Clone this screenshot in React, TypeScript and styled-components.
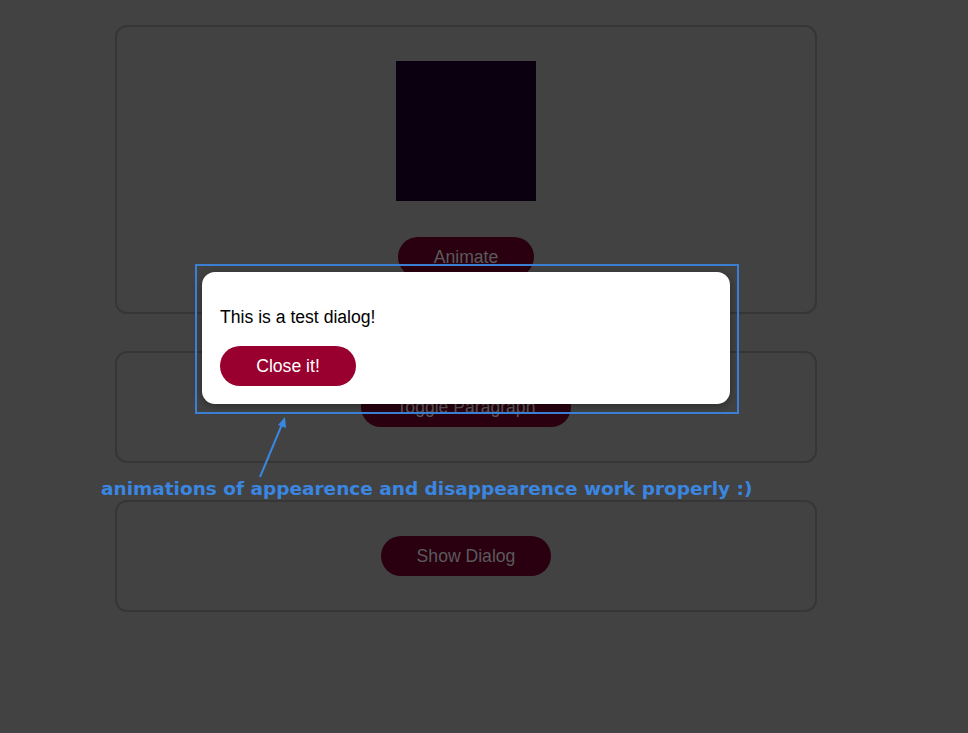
import React from "react";
import styled, { createGlobalStyle } from "styled-components";

const Global = createGlobalStyle`
  html, body { margin: 0; padding: 0; background: #424242; }
  body { font-family: "Liberation Sans", Arial, sans-serif; }
  * { box-sizing: border-box; }
`;

const Page = styled.div`
  position: relative;
  width: 968px;
  height: 733px;
  overflow: hidden;
  padding: 25px 0 0 115px;
`;

const Stack = styled.div`
  width: 702px;
  display: flex;
  flex-direction: column;
  gap: 37px;
`;

const Card = styled.section<{ $tall?: boolean }>`
  border: 2px solid #363636;
  border-radius: 12px;
  padding: 34px 34px ${(p) => (p.$tall ? "35px" : "34px")};
  display: flex;
  flex-direction: column;
  align-items: center;
  gap: 36px;
`;

const Square = styled.div`
  width: 140px;
  height: 140px;
  background: #0b0010;
`;

const DimButton = styled.button`
  height: 40px;
  padding: 0 36px;
  border: none;
  border-radius: 20px;
  background: #2a0011;
  color: #5a5a5a;
  font-family: "Liberation Sans", Arial, sans-serif;
  font-size: 17.6px;
`;

const Dialog = styled.div`
  position: absolute;
  left: 202px;
  top: 272px;
  width: 528px;
  height: 132px;
  background: #ffffff;
  border-radius: 13px;
  box-shadow: 0 2px 10px rgba(0, 0, 0, 0.35);
  padding: 35px 18px 19px;
`;

const DialogText = styled.p`
  margin: 0 0 19px;
  font-size: 17.6px;
  line-height: 20px;
  color: #000;
`;

const CloseButton = styled.button`
  width: 136px;
  height: 40px;
  border: none;
  border-radius: 20px;
  background: #990030;
  color: #ffffff;
  font-family: "Liberation Sans", Arial, sans-serif;
  font-size: 17.6px;
`;

const Frame = styled.div`
  position: absolute;
  left: 195px;
  top: 264px;
  width: 544px;
  height: 150px;
  border: 2px solid #3a7fd4;
  pointer-events: none;
`;

const ArrowSvg = styled.svg`
  position: absolute;
  left: 250px;
  top: 410px;
`;

const Note = styled.div`
  position: absolute;
  left: 101px;
  top: 478px;
  font-family: "DejaVu Sans", sans-serif;
  font-weight: bold;
  font-size: 18.5px;
  line-height: 22px;
  color: #3a86e0;
  white-space: nowrap;
`;

export default function App() {
  return (
    <Page>
      <Global />
      <Stack>
        <Card $tall>
          <Square />
          <DimButton>Animate</DimButton>
        </Card>
        <Card>
          <DimButton>Toggle Paragraph</DimButton>
        </Card>
        <Card>
          <DimButton>Show Dialog</DimButton>
        </Card>
      </Stack>
      <Dialog>
        <DialogText>This is a test dialog!</DialogText>
        <CloseButton>Close it!</CloseButton>
      </Dialog>
      <Frame />
      <ArrowSvg width="50" height="75" viewBox="0 0 50 75">
        <line x1="10" y1="67" x2="33" y2="12" stroke="#3a86e0" strokeWidth="2" />
        <polygon points="35,7 36,18 28,15" fill="#3a86e0" />
      </ArrowSvg>
      <Note>animations of appearence and disappearence work properly :)</Note>
    </Page>
  );
}
